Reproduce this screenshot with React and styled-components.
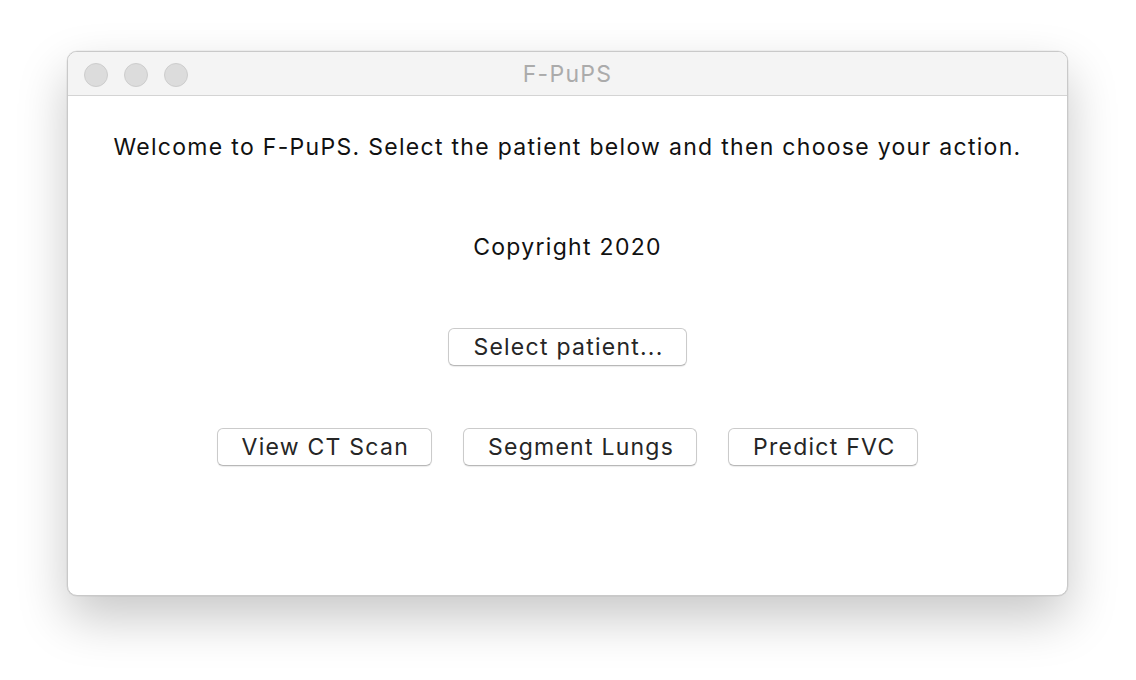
import styled, { createGlobalStyle } from "styled-components";

const GlobalStyle = createGlobalStyle`
  html, body {
    margin: 0;
    padding: 0;
    background: #ffffff;
  }
  body {
    font-family: Inter, "Noto Sans", sans-serif;
    -webkit-font-smoothing: antialiased;
  }
`;

const Desktop = styled.div`
  width: 1136px;
  height: 680px;
  padding: 51px 0 0 67px;
  box-sizing: border-box;
  background: #ffffff;
`;

const Window = styled.div`
  width: 1001px;
  height: 545px;
  box-sizing: border-box;
  display: flex;
  flex-direction: column;
  background: #ffffff;
  border: 1px solid #c9c9c9;
  border-radius: 10px;
  overflow: hidden;
  box-shadow: 0 22px 50px rgba(0, 0, 0, 0.22), 0 0 0 0.5px rgba(0, 0, 0, 0.08);
`;

const TitleBar = styled.div`
  position: relative;
  height: 43px;
  flex-shrink: 0;
  display: flex;
  align-items: center;
  justify-content: center;
  background: #f4f4f4;
  border-bottom: 1px solid #d4d4d4;
`;

const Lights = styled.div`
  position: absolute;
  left: 16px;
  top: 11px;
  display: flex;
  gap: 16px;
`;

const Light = styled.span`
  width: 24px;
  height: 24px;
  border-radius: 50%;
  background: #dcdcdc;
  border: 1px solid #cdcdcd;
  box-sizing: border-box;
`;

const Title = styled.div`
  font-size: 23px;
  letter-spacing: 1.25px;
  color: #ababab;
`;

const Body = styled.div`
  flex: 1;
  display: flex;
  flex-direction: column;
  align-items: center;
  padding-top: 38px;
`;

const Message = styled.p`
  margin: 0;
  font-size: 23px;
  line-height: 26px;
  letter-spacing: 1.3px;
  color: #111111;
  white-space: nowrap;
`;

const Spaced = styled.div`
  margin-top: ${(p) => p.$gap}px;
  display: flex;
  gap: 31px;
`;

const Button = styled.button`
  height: 38px;
  padding: 0 22px 0 24px;
  font-family: Inter, "Noto Sans", sans-serif;
  font-size: 23px;
  letter-spacing: 1.25px;
  color: #262626;
  background: #ffffff;
  border: 1px solid #cbcbcb;
  border-bottom-color: #b8b8b8;
  border-radius: 6px;
  box-shadow: 0 1px 1px rgba(0, 0, 0, 0.08);
  cursor: pointer;
`;

export default function App() {
  return (
    <>
      <GlobalStyle />
      <Desktop>
        <Window>
          <TitleBar>
            <Lights>
              <Light />
              <Light />
              <Light />
            </Lights>
            <Title>F-PuPS</Title>
          </TitleBar>
          <Body>
            <Message>
              Welcome to F-PuPS. Select the patient below and then choose your
              action.
            </Message>
            <Spaced $gap={74}>
              <Message>Copyright 2020</Message>
            </Spaced>
            <Spaced $gap={68}>
              <Button>Select patient...</Button>
            </Spaced>
            <Spaced $gap={62}>
              <Button>View CT Scan</Button>
              <Button>Segment Lungs</Button>
              <Button>Predict FVC</Button>
            </Spaced>
          </Body>
        </Window>
      </Desktop>
    </>
  );
}
